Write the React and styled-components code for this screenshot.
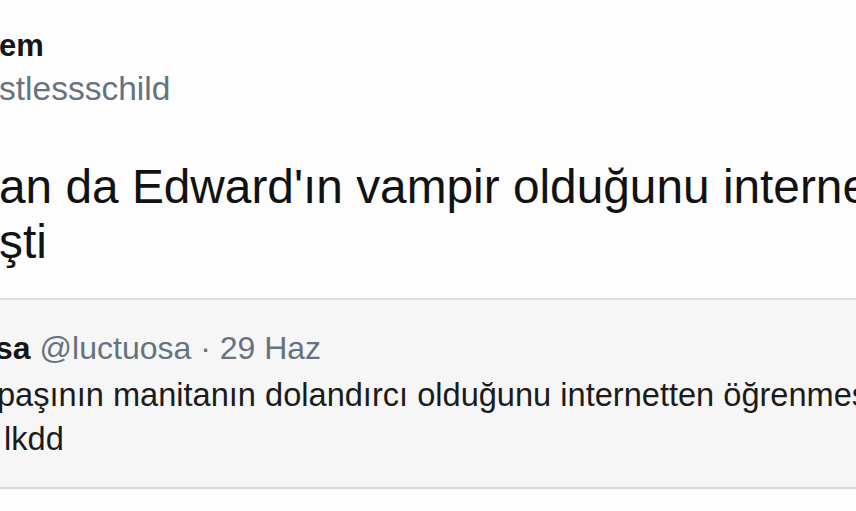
import React from "react";
import styled, { createGlobalStyle } from "styled-components";

const Global = createGlobalStyle`
  html, body {
    margin: 0;
    padding: 0;
    background: #fdfdfd;
  }
  body {
    font-family: "Liberation Sans", Arial, "Noto Sans", sans-serif;
    -webkit-font-smoothing: antialiased;
  }
`;

const Page = styled.div`
  width: 856px;
  height: 511px;
  overflow: hidden;
  background: #fdfdfd;
  display: flex;
  flex-direction: column;
  padding-top: 26px;
  box-sizing: border-box;
`;

const Author = styled.header`
  display: flex;
  flex-direction: column;
  gap: 3px;
`;

const Name = styled.div`
  font-size: 31px;
  line-height: 40px;
  font-weight: 700;
  color: #141619;
  white-space: nowrap;
  margin-left: -1px;
`;

const Handle = styled.div`
  font-size: 33.5px;
  line-height: 40px;
  color: #66737f;
  white-space: nowrap;
  margin-left: -1px;
`;

const Body = styled.p`
  margin: 50px 0 0;
  font-size: 47.8px;
  line-height: 55px;
  color: #121212;
  white-space: nowrap;
`;

const Line = styled.span`
  display: block;
  margin-left: ${(p) => p.$indent || 0}px;
`;

const Quote = styled.section`
  margin-top: 29px;
  background: #f6f6f6;
  border-top: 2px solid #d9dcdc;
  border-bottom: 2px solid #d5dbda;
  padding: 28px 0 26px;
  display: flex;
  flex-direction: column;
  gap: 5px;
`;

const QuoteHead = styled.div`
  font-size: 32px;
  line-height: 40px;
  color: #66737f;
  white-space: nowrap;
  margin-left: -5px;
`;

const QuoteName = styled.b`
  font-weight: 700;
  color: #141619;
  margin-right: 9px;
`;

const QuoteText = styled.p`
  margin: 0;
  font-size: 32.6px;
  line-height: 44px;
  color: #1b1b1b;
  white-space: nowrap;
`;

export default function App() {
  return (
    <>
      <Global />
      <Page>
        <Author>
          <Name>em</Name>
          <Handle>stlessschild</Handle>
        </Author>
        <Body>
          <Line $indent={-1}>an da Edward'ın vampir olduğunu internetten</Line>
          <Line $indent={-1}>şti</Line>
        </Body>
        <Quote>
          <QuoteHead>
            <QuoteName>sa</QuoteName>@luctuosa · 29 Haz
          </QuoteHead>
          <QuoteText>
            <Line $indent={-3}>paşının manitanın dolandırcı olduğunu internetten öğrenmesi</Line>
            <Line $indent={4}>lkdd</Line>
          </QuoteText>
        </Quote>
      </Page>
    </>
  );
}
